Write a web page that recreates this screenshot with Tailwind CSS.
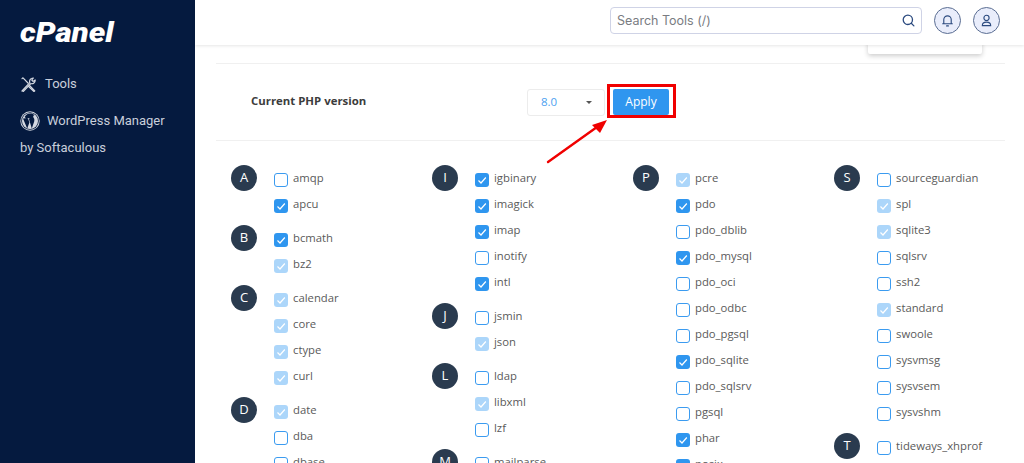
<!DOCTYPE html>
<html>
<head>
    <title>cPanel - Select PHP Version</title>
    <script src="https://cdn.jsdelivr.net/npm/@tailwindcss/browser@4"></script>
</head>
<body class="h-[463px] overflow-hidden bg-white font-['Open_Sans',sans-serif]">
    <div class="flex h-[463px]">
        <!-- Sidebar -->
        <aside class="w-[195px] shrink-0 bg-[#051a3f] font-['Roboto',sans-serif] text-[13px] text-[#c9cfdb]">
            <div class="pl-[20px] pt-[15px] h-[66px] text-[28px] leading-[36px] font-black italic text-white font-['Roboto',sans-serif]">
                <span class="inline-block origin-left scale-x-[1.12]">cPanel</span>
            </div>
            <div class="flex items-center gap-[9px] pl-[21px] h-[36px]">
                <svg class="w-[15px] h-[15px]" viewBox="0 0 15 15" fill="none" stroke="#d5d9e2" stroke-width="1.2" stroke-linecap="round" stroke-linejoin="round">
                    <path d="M1 14 L8.8 5.6 C8 3.4 9.6 0.8 12.4 1 L10.8 3 L12 4.4 L14.2 3 C14.4 5.6 12 7.2 9.8 6.6 L2.2 14.6"/>
                    <path d="M1 1.6 L2 0.8 L7 6 M8.5 8.5 L13.8 13.8 L13 14.6 L7.4 9.4"/>
                </svg>
                <span>Tools</span>
            </div>
            <div class="flex items-center gap-[7px] pl-[20px] h-[38px]">
                <svg class="w-[20px] h-[20px]" viewBox="0 0 20 20">
                    <circle cx="10" cy="10" r="9.7" fill="#d5d9e2"/>
                    <circle cx="10" cy="10" r="8.8" fill="#051a3f"/>
                    <circle cx="10" cy="10" r="8" fill="#d5d9e2"/>
                    <path d="M3 7.5 L7.2 17.6 L9.4 11.6 L8 7.5 L6.8 7.2 L9.6 7 L9.6 7.5 L8.8 7.5 L11.8 17.4 L14.2 10.4 C15 8 13.4 7 13.2 5.8 C13.2 4.8 14 4.2 14.6 4.4 C12 1.6 6.8 2 4.6 6 L6 7.2 L3 7.5 Z" fill="#051a3f"/>
                </svg>
                <span>WordPress Manager</span>
            </div>
            <div class="pl-[20px] leading-[16px]">by Softaculous</div>
        </aside>

        <div class="relative flex-1 min-w-0">
            <!-- Top bar -->
            <header class="relative z-10 flex items-center h-[45px] pb-[4px] bg-white shadow-[0_1px_3px_rgba(0,0,0,0.1)] pl-[415px] font-['Inter',sans-serif]">
                <div class="flex items-center justify-between w-[312px] h-[27px] border border-[#cfd3e6] rounded-[4px] pl-[6px] pr-[6px] text-[12.5px] text-[#7a7c82]">
                    <span class="pt-[1px]">Search Tools (/)</span>
                    <svg class="w-[13px] h-[13px]" viewBox="0 0 14 14" fill="none" stroke="#2b4a7f" stroke-width="1.4" stroke-linecap="round"><circle cx="6.3" cy="6.3" r="5"/><path d="M10 10 L12.8 12.8"/></svg>
                </div>
                <div class="flex items-center justify-center ml-[12px] w-[27px] h-[27px] rounded-full border border-[#5a6d92] bg-[#e9edfb]">
                    <svg class="w-[13px] h-[13px]" viewBox="0 0 14 14" fill="none" stroke="#2b4a7f" stroke-width="1.2" stroke-linecap="round" stroke-linejoin="round"><path d="M3 10.5 V6 a4 4 0 0 1 8 0 V10.5 M1.8 10.5 H12.2 M6 12.8 H8"/></svg>
                </div>
                <div class="flex items-center justify-center ml-[12px] w-[27px] h-[27px] rounded-full border border-[#5a6d92] bg-[#e9edfb]">
                    <svg class="w-[13px] h-[13px]" viewBox="0 0 14 14" fill="none" stroke="#2b4a7f" stroke-width="1.2" stroke-linecap="round"><circle cx="7" cy="4.2" r="2.8"/><path d="M2.5 12.5 C2.5 9.8 4.5 8.8 7 8.8 C9.5 8.8 11.5 9.8 11.5 12.5 Z"/></svg>
                </div>
            </header>

            <!-- Menu sticking out from under the top bar -->
            <div class="absolute left-[673px] top-[40px] w-[114px] h-[14px] bg-white rounded-b-[2px] shadow-[0_2px_5px_rgba(0,0,0,0.2)]"></div>

            <main class="pl-[21px] pt-[18px]">
                <!-- Version row -->
                <div class="flex items-center h-[78px] w-[789px] border-y border-[#f0f0f0] pl-[35px]">
                    <span class="w-[276px] mb-[2px] text-[11.4px] font-bold text-[#3c3c3c]">Current PHP version</span>
                    <div class="flex items-center justify-between w-[78px] h-[27px] border border-[#ececec] rounded-[3px] pl-[13px] pr-[12px] text-[11.5px] text-[#4d9ff0]">
                        <span class="mb-[1px]">8.0</span>
                        <span class="w-0 h-0 border-x-[3.5px] border-x-transparent border-t-[3.5px] border-t-[#555]"></span>
                    </div>
                    <button class="ml-[8px] w-[56px] h-[26px] rounded-[2px] bg-[#2f96ef] text-[12px] text-white">Apply</button>
                </div>

                <!-- Extensions, filled in by the script below -->
                <div id="extensions" class="grid grid-cols-[201px_201px_201px_180px] pl-[15px] pt-[24px] text-[11.3px] text-[#5a5a5a]"></div>
            </main>

            <!-- Red annotation over the Apply button -->
            <div class="absolute left-[412px] top-[84px] w-[69px] h-[34px] border-[3px] border-[#f00000]"></div>
            <svg class="absolute left-[350px] top-[115px] w-[65px] h-[50px]" viewBox="0 0 65 50">
                <path d="M3 47 L52 12" stroke="#f00000" stroke-width="2.4" stroke-linecap="round"/>
                <path d="M62 5 L47 10 L55 18 Z" fill="#f00000"/>
            </svg>
        </div>
    </div>

    <script>
        // state: 0 = off, 1 = on, 2 = on but locked (pale)
        const columns = [
            [['A', [['amqp', 0], ['apcu', 1]]],
             ['B', [['bcmath', 1], ['bz2', 2]]],
             ['C', [['calendar', 2], ['core', 2], ['ctype', 2], ['curl', 2]]],
             ['D', [['date', 2], ['dba', 0], ['dbase', 0]]]],
            [['I', [['igbinary', 1], ['imagick', 1], ['imap', 1], ['inotify', 0], ['intl', 1]]],
             ['J', [['jsmin', 0], ['json', 2]]],
             ['L', [['ldap', 0], ['libxml', 2], ['lzf', 0]]],
             ['M', [['mailparse', 0]]]],
            [['P', [['pcre', 2], ['pdo', 1], ['pdo_dblib', 0], ['pdo_mysql', 1], ['pdo_oci', 0], ['pdo_odbc', 0], ['pdo_pgsql', 0], ['pdo_sqlite', 1], ['pdo_sqlsrv', 0], ['pgsql', 0], ['phar', 1], ['posix', 1]]]],
            [['S', [['sourceguardian', 0], ['spl', 2], ['sqlite3', 2], ['sqlsrv', 0], ['ssh2', 0], ['standard', 2], ['swoole', 0], ['sysvmsg', 0], ['sysvsem', 0], ['sysvshm', 0]]],
             ['T', [['tideways_xhprof', 0]]]]
        ];

        const check = '<svg class="w-[10px] h-[10px]" viewBox="0 0 10 10" fill="none" stroke="#fff" stroke-width="1.2"><path d="M1.5 5.5 L4 8 L8.8 2.5"/></svg>';
        const boxes = [
            '<span class="mt-[3px] w-[14px] h-[14px] rounded-[3px] border-[1.5px] border-[#3b9bf0]"></span>',
            '<span class="mt-[3px] flex items-center justify-center w-[14px] h-[14px] rounded-[3px] bg-[#2f96ef]">' + check + '</span>',
            '<span class="mt-[3px] flex items-center justify-center w-[14px] h-[14px] rounded-[3px] bg-[#acd6fa]">' + check + '</span>'
        ];

        document.getElementById('extensions').innerHTML = columns.map(groups =>
            '<div class="flex flex-col gap-[8px]">' + groups.map(([letter, items]) =>
                '<div class="flex gap-[17px]">' +
                '<span class="flex items-center justify-center shrink-0 w-[26px] h-[26px] rounded-full bg-[#2a3b4f] text-[13px] text-white">' + letter + '</span>' +
                '<div>' + items.map(([name, state]) =>
                    '<label class="flex items-center gap-[5px] h-[26px]">' + boxes[state] + name + '</label>'
                ).join('') + '</div></div>'
            ).join('') + '</div>'
        ).join('');
    </script>
</body>
</html>
